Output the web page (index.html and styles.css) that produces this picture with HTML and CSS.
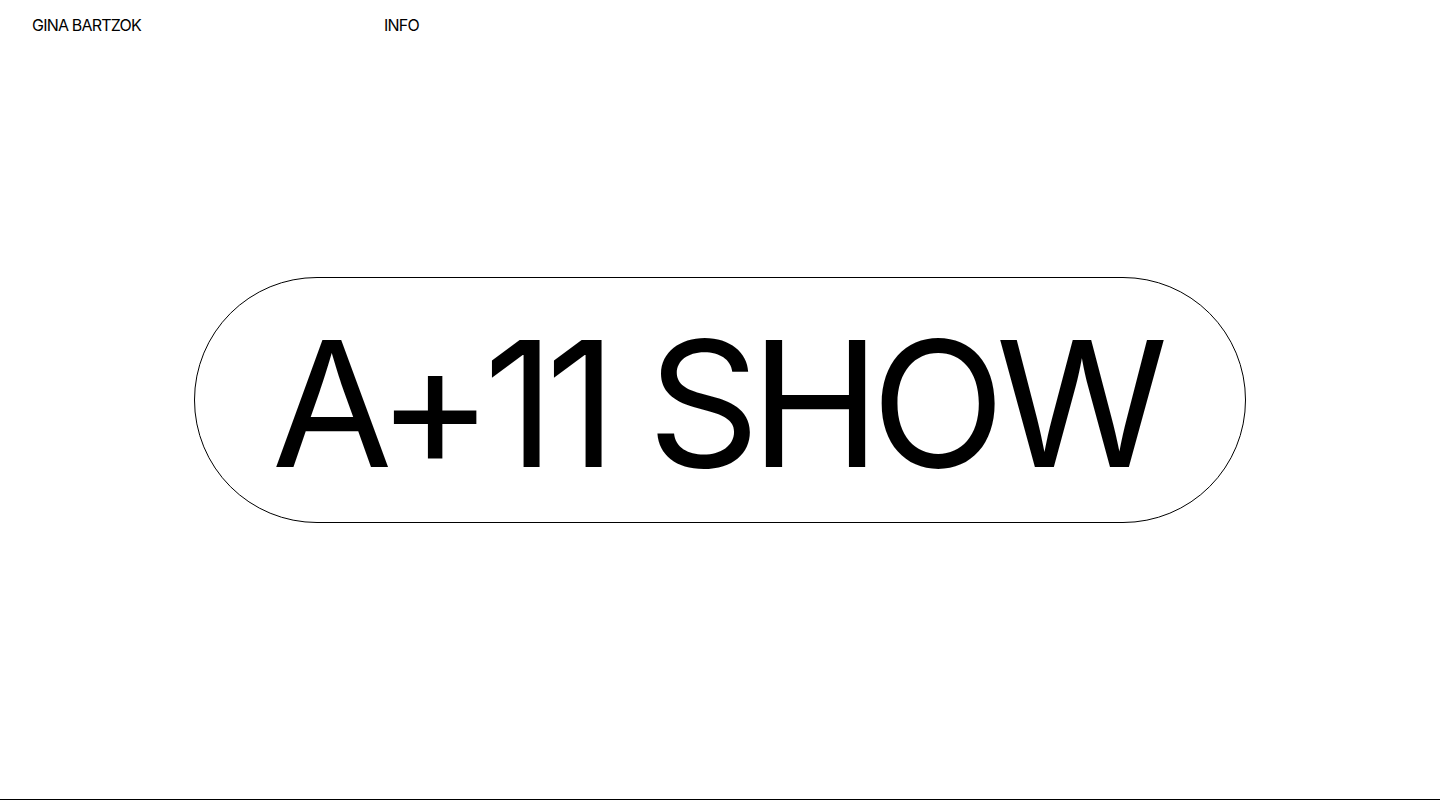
FILE: index.html
```html
<!DOCTYPE html>
<html lang="en">
<head>
<meta charset="utf-8">
<title>Gina Bartzok — A+11 Show</title>
<link rel="stylesheet" href="styles.css">
</head>
<body>
<div class="page">
  <header class="site-header">
    <a class="nav-link nav-name" href="#">GINA BARTZOK</a>
    <a class="nav-link" href="#">INFO</a>
  </header>
  <main class="hero">
    <div class="pill"><h1 class="title">A+11 SHOW</h1></div>
  </main>
  <div class="spacer"></div>
</div>
</body>
</html>
```
FILE: styles.css
```css
html, body {
  margin: 0;
  padding: 0;
  background: #fff;
  color: #000;
}
body {
  font-family: Inter, "Liberation Sans", Arial, sans-serif;
}
.page {
  height: 799px;
  border-bottom: 1px solid #000;
  display: grid;
  grid-template-rows: 50px 1fr 50px;
}
.site-header {
  display: flex;
  align-items: flex-start;
  padding: 15px 32px 0;
}
.nav-link {
  font-size: 16px;
  line-height: 20px;
  letter-spacing: -0.05em;
  color: #000;
  text-decoration: none;
}
.nav-name {
  width: 352px;
}
.hero {
  display: flex;
  align-items: center;
  justify-content: center;
}
.pill {
  box-sizing: border-box;
  width: 1052px;
  height: 246px;
  border: 1px solid #000;
  border-radius: 999px;
  display: flex;
  align-items: center;
  justify-content: center;
  padding-top: 8px;
}
.title {
  margin: 0;
  font-weight: 400;
  font-size: 175px;
  line-height: 1;
  letter-spacing: -0.053em;
  white-space: nowrap;
  margin-right: 0.053em;
}
```
